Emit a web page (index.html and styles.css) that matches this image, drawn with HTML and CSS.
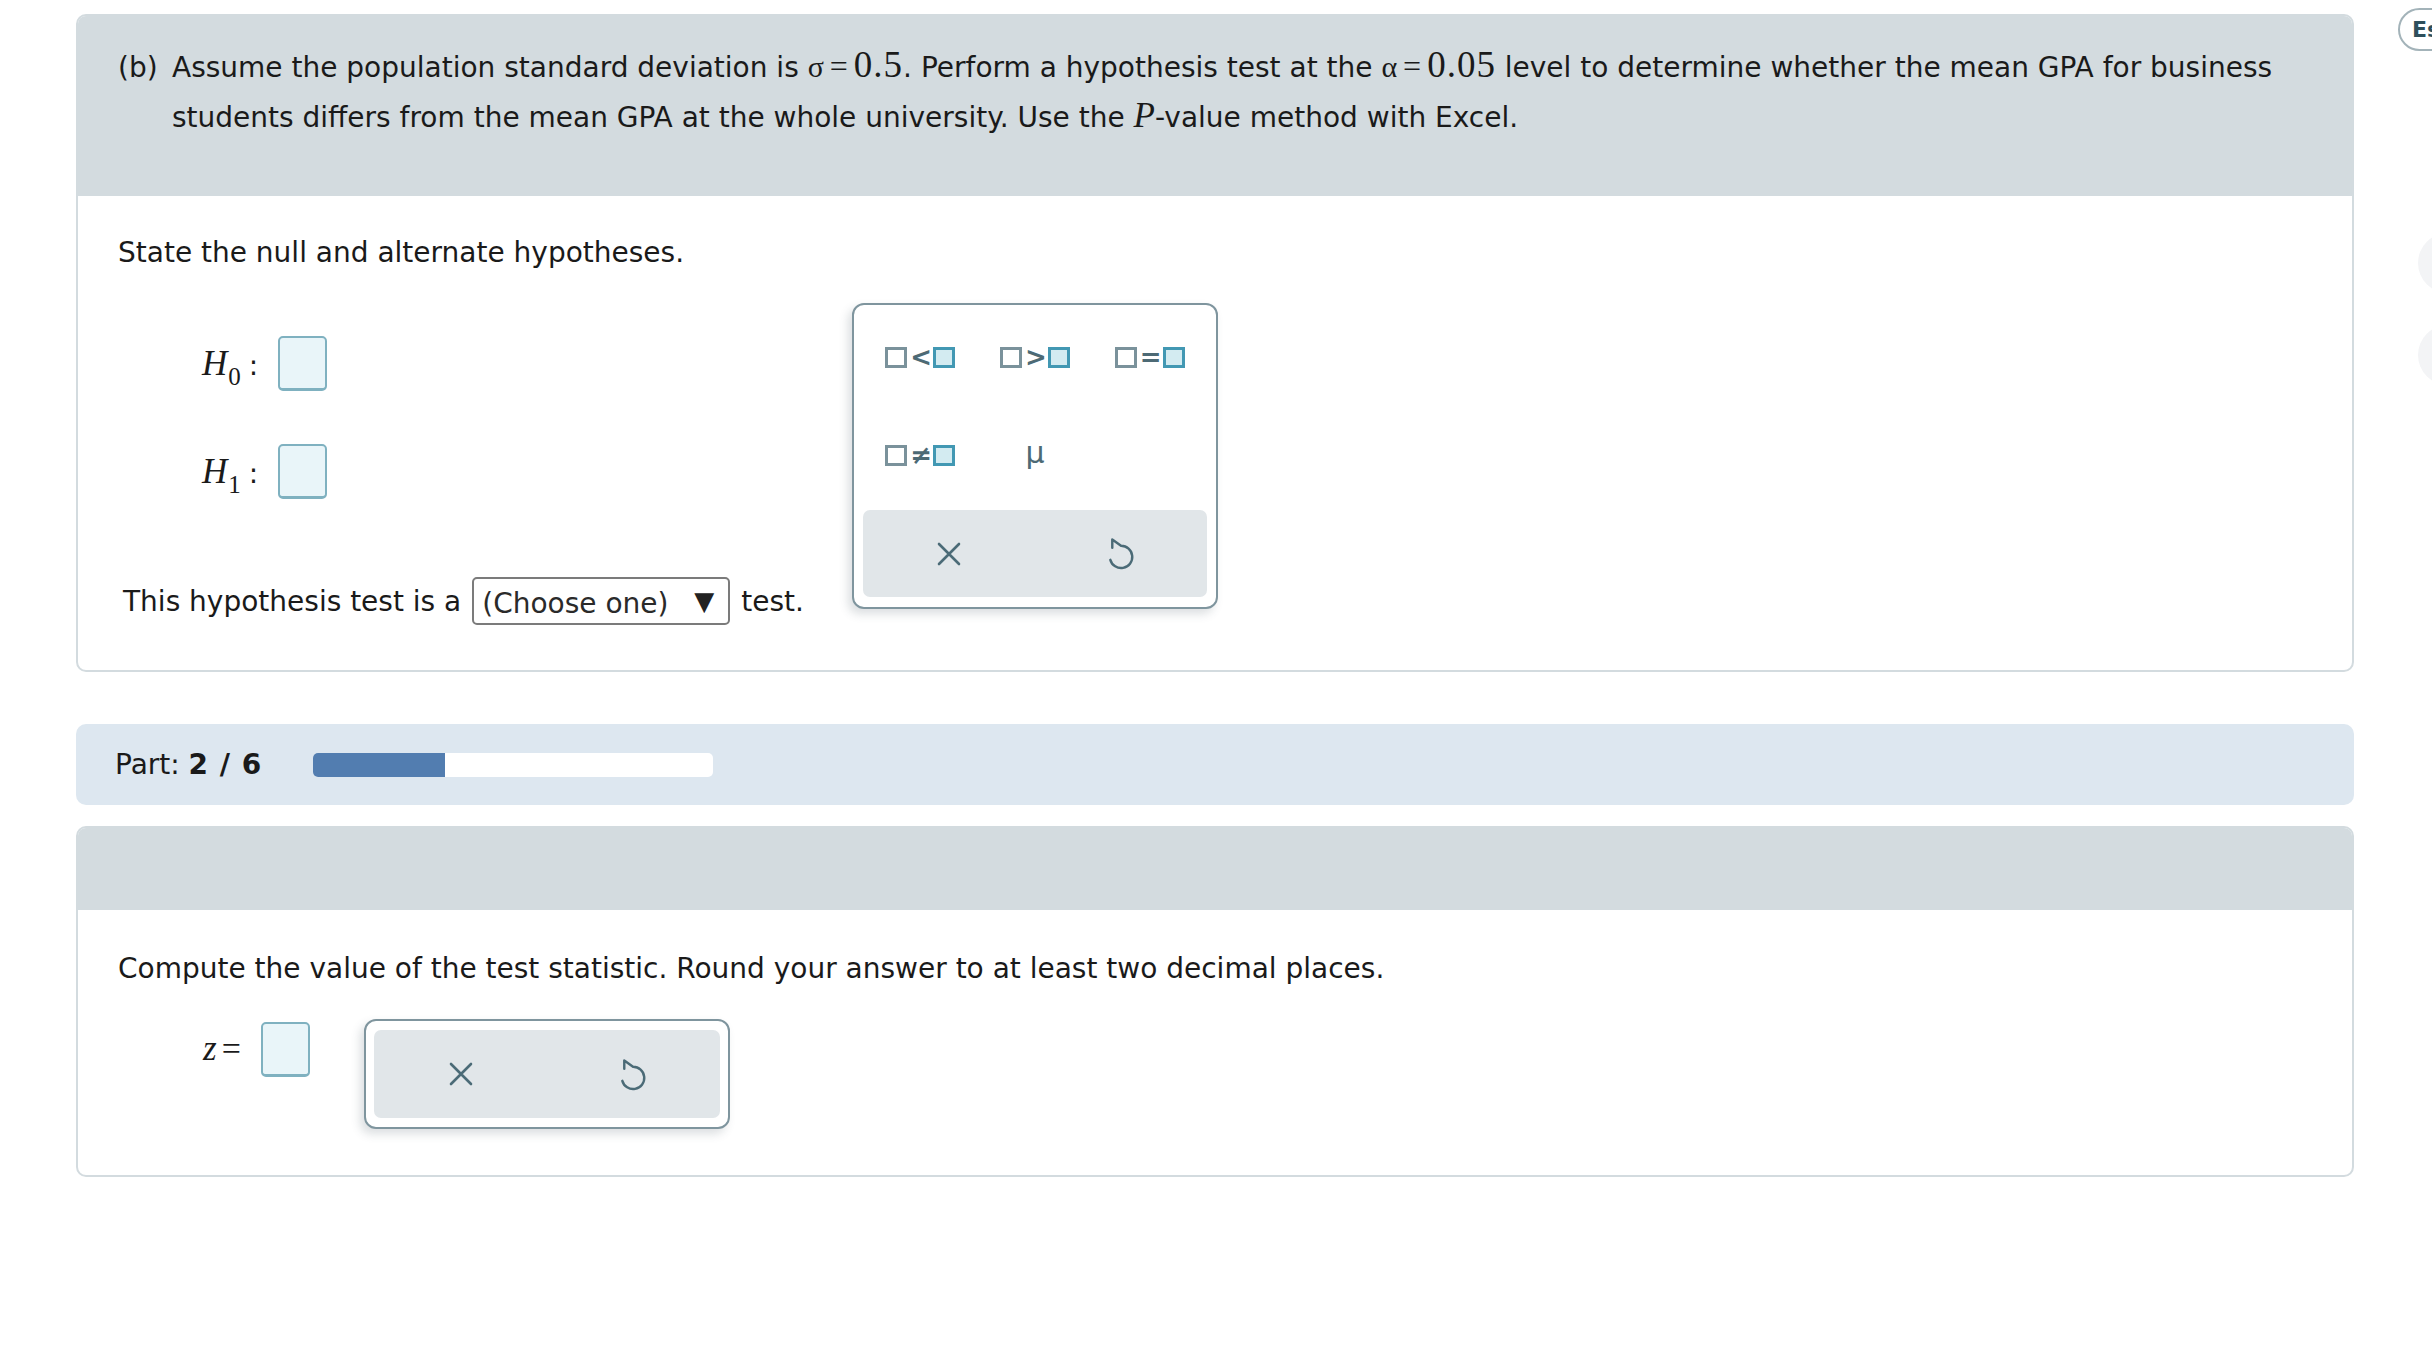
FILE: index.html
```html
<!DOCTYPE html>
<html lang="en">

<head>
    <meta charset="UTF-8">
    <meta name="viewport" content="width=device-width, initial-scale=1.0">
    <title>Hypothesis Test - Part 2</title>
    <link rel="stylesheet" href="styles.css">
</head>

<body>
    <div class="page">
        <div class="main">

            <!-- Part b -->
            <div class="card">
                <div class="card-head">
                    <div class="question">
                        <span class="q-label">(b)</span>
                        <p class="q-text">Assume the population standard deviation is
                            <span class="math"><span class="greek">σ</span><span class="eq">=</span><span class="num">0.5</span></span>.
                            Perform a hypothesis test at the
                            <span class="math"><span class="greek">α</span><span class="eq">=</span><span class="num">0.05</span></span>
                            level to determine whether the mean GPA for business students differs from the mean GPA at the
                            whole university. Use the <span class="var">P</span>-value method with Excel.</p>
                    </div>
                </div>
                <div class="card-body">
                    <p class="prompt">State the null and alternate hypotheses.</p>

                    <div class="hyps">
                        <div class="hyp-row">
                            <span class="hyp-label"><span class="var">H</span><sub>0</sub><span class="colon">:</span></span>
                            <span class="answer-box"></span>
                        </div>
                        <div class="hyp-row">
                            <span class="hyp-label"><span class="var">H</span><sub>1</sub><span class="colon">:</span></span>
                            <span class="answer-box"></span>
                        </div>
                    </div>

                    <div class="test-row">
                        <span>This hypothesis test is a</span>
                        <div class="select">
                            <span>(Choose one)</span>
                            <span class="select-arrow">▼</span>
                        </div>
                        <span>test.</span>
                    </div>

                    <!-- keypad that pops up next to the answer boxes -->
                    <div class="keypad keypad-float">
                        <div class="keys">
                            <button class="key"><span class="sq"></span><span class="op">&lt;</span><span class="sq sq-blue"></span></button>
                            <button class="key"><span class="sq"></span><span class="op">&gt;</span><span class="sq sq-blue"></span></button>
                            <button class="key"><span class="sq"></span><span class="op">=</span><span class="sq sq-blue"></span></button>
                            <button class="key"><span class="sq"></span><span class="op">≠</span><span class="sq sq-blue"></span></button>
                            <button class="key key-mu">μ</button>
                        </div>
                        <div class="keypad-foot">
                            <button class="foot-btn">
                                <svg width="24" height="24" viewBox="0 0 24 24" fill="none" stroke="#4b6b77" stroke-width="2.6" stroke-linecap="round"><path d="M2 2 L22 22 M22 2 L2 22" /></svg>
                            </button>
                            <button class="foot-btn">
                                <svg width="27" height="33" viewBox="0 0 27 34" fill="none" stroke="#4b6b77" stroke-width="2.5" stroke-linecap="round" stroke-linejoin="round"><path d="M4 11 L4 2.5 L13 9 A11.5 11.5 0 1 1 2 23.5" /></svg>
                            </button>
                        </div>
                    </div>
                </div>
            </div>

            <!-- progress -->
            <div class="part-bar">
                <span class="part-text">Part: <b>2 / 6</b></span>
                <div class="progress"><div class="progress-fill" style="width: 33%"></div></div>
            </div>

            <!-- Part c -->
            <div class="card">
                <div class="card-head card-head-empty"></div>
                <div class="card-body card-body-2">
                    <p class="prompt">Compute the value of the test statistic. Round your answer to at least two decimal places.</p>

                    <div class="z-row">
                        <span class="z-label"><span class="var">z</span><span class="eq">=</span></span>
                        <span class="answer-box"></span>
                        <div class="keypad keypad-small">
                            <div class="keypad-foot">
                                <button class="foot-btn">
                                    <svg width="24" height="24" viewBox="0 0 24 24" fill="none" stroke="#4b6b77" stroke-width="2.6" stroke-linecap="round"><path d="M2 2 L22 22 M22 2 L2 22" /></svg>
                                </button>
                                <button class="foot-btn">
                                    <svg width="27" height="33" viewBox="0 0 27 34" fill="none" stroke="#4b6b77" stroke-width="2.5" stroke-linecap="round" stroke-linejoin="round"><path d="M4 11 L4 2.5 L13 9 A11.5 11.5 0 1 1 2 23.5" /></svg>
                                </button>
                            </div>
                        </div>
                    </div>
                </div>
            </div>
        </div>

        <div class="sidebar">
            <div class="lang-pill">Español</div>
            <div class="side-circle"></div>
            <div class="side-circle"></div>
        </div>
    </div>
</body>

</html>
```

FILE: styles.css
```css
* {
    margin: 0;
    padding: 0;
    box-sizing: border-box;
}

body {
    font-family: "DejaVu Sans", Verdana, sans-serif;
    font-size: 28px;
    color: #1a1a1a;
    background-color: #fff;
    overflow: hidden;
}

.page {
    display: flex;
    gap: 44px;
    padding: 8px 0 0 76px;
}

.main {
    width: 2278px;
    flex-shrink: 0;
    padding-top: 6px;
}

/* Cards */
.card {
    border: 2px solid #d3dbdf;
    border-radius: 10px;
}

.card-head {
    background-color: #d3dbdf;
    border-radius: 8px 8px 0 0;
    padding: 25px 40px 54px 40px;
}

.card-head-empty {
    height: 82px;
    padding: 0;
}

.question {
    display: flex;
    align-items: baseline;
    line-height: 48px;
}

.q-label {
    width: 54px;
    flex-shrink: 0;
}

.q-text {
    max-width: 2140px;
}

/* inline math */
.math {
    font-family: "Liberation Serif", "Times New Roman", serif;
    white-space: nowrap;
}

.greek {
    font-size: 30px;
}

.eq {
    font-family: "Liberation Serif", serif;
    font-size: 32px;
    padding: 0 6px;
}

.num {
    font-size: 37px;
    letter-spacing: 1px;
}

.var {
    font-family: "Liberation Serif", "Times New Roman", serif;
    font-style: italic;
    font-size: 35px;
}

.card-body {
    position: relative;
    padding: 37px 40px 45px 40px;
}

.card-body-2 {
    padding: 39px 40px 46px 40px;
}

.prompt {
    line-height: 40px;
}

/* Hypotheses */
.hyps {
    display: flex;
    flex-direction: column;
    gap: 53px;
    margin-top: 63px;
    padding-left: 84px;
}

.hyp-row {
    display: flex;
    align-items: center;
    gap: 10px;
}

.hyp-label {
    display: flex;
    align-items: baseline;
    width: 66px;
}

.hyp-label sub {
    font-family: "Liberation Serif", serif;
    font-size: 25px;
    position: relative;
    top: 10px;
    vertical-align: baseline;
    margin-left: 1px;
}

.colon {
    margin-left: 8px;
    font-size: 28px;
}

.answer-box {
    display: inline-block;
    width: 49px;
    height: 55px;
    background-color: #e9f5f9;
    border: 2px solid #7fb1c0;
    border-bottom-width: 3px;
    border-radius: 5px;
    flex-shrink: 0;
}

/* Select row */
.test-row {
    display: flex;
    align-items: center;
    gap: 11px;
    margin-top: 78px;
    padding-left: 5px;
}

.select {
    display: flex;
    align-items: center;
    justify-content: space-between;
    width: 258px;
    height: 48px;
    padding: 4px 14px 0 8px;
    border: 2px solid #7b7b7b;
    border-radius: 5px;
    color: #2a2a2a;
}

.select-arrow {
    font-size: 26px;
    color: #222;
    margin-top: -4px;
}

/* Keypad */
.keypad {
    background-color: #fff;
    border: 2px solid #7f959e;
    border-radius: 12px;
    box-shadow: -4px 5px 10px rgba(60, 80, 90, 0.18);
}

.keypad-float {
    position: absolute;
    left: 774px;
    top: 107px;
    width: 366px;
    height: 306px;
    padding: 3px 9px 10px 9px;
}

.keys {
    display: grid;
    grid-template-columns: repeat(3, 1fr);
    grid-auto-rows: 98px;
}

.key {
    display: flex;
    align-items: center;
    justify-content: center;
    gap: 3px;
    background: none;
    border: none;
    font-family: "DejaVu Sans", sans-serif;
    color: #4d6a75;
    cursor: pointer;
}

.key-mu {
    font-size: 30px;
    padding-bottom: 6px;
}

.sq {
    display: inline-block;
    width: 22px;
    height: 21px;
    border: 3px solid #7a929b;
    background-color: #fff;
}

.sq-blue {
    border-color: #4298b3;
    background-color: #d3ebf1;
}

.op {
    font-size: 26px;
    line-height: 1;
    color: #4d6a75;
    font-weight: bold;
    width: 20px;
    text-align: center;
}

.keypad-foot {
    display: grid;
    grid-template-columns: 1fr 1fr;
    height: 87px;
    margin-top: 6px;
    background-color: #e1e6e9;
    border-radius: 7px;
}

.foot-btn {
    display: flex;
    align-items: center;
    justify-content: center;
    background: none;
    border: none;
    cursor: pointer;
}

/* z row */
.z-row {
    display: flex;
    align-items: flex-start;
    margin-top: 30px;
    padding-left: 85px;
}

.z-label {
    display: flex;
    align-items: baseline;
    width: 58px;
    margin-top: 10px;
}

.z-label .eq {
    font-size: 34px;
    padding: 0 0 0 5px;
}

.z-row .answer-box {
    margin-top: 3px;
}

.keypad-small {
    width: 366px;
    height: 110px;
    margin-left: 54px;
    padding: 9px 8px 9px 8px;
}

.keypad-small .keypad-foot {
    margin-top: 0;
    height: 88px;
}

/* Part progress bar */
.part-bar {
    display: flex;
    align-items: center;
    gap: 51px;
    height: 81px;
    margin: 52px 0 21px 0;
    padding-left: 39px;
    background-color: #dde7f0;
    border-radius: 10px;
}

.part-text b {
    letter-spacing: 1px;
}

.progress {
    width: 400px;
    height: 24px;
    background-color: #fff;
    border-radius: 5px;
    overflow: hidden;
}

.progress-fill {
    height: 100%;
    background-color: #527db0;
}

/* Right side tools (mostly cut off) */
.sidebar {
    width: 200px;
    flex-shrink: 0;
    display: flex;
    flex-direction: column;
}

.lang-pill {
    height: 43px;
    padding: 0 12px;
    border: 2px solid #a3b3b9;
    border-radius: 22px;
    font-size: 22px;
    font-weight: bold;
    line-height: 39px;
    color: #2e4f5b;
    white-space: nowrap;
    align-self: flex-start;
}

.side-circle {
    width: 60px;
    height: 60px;
    margin: 182px 0 0 20px;
    border-radius: 50%;
    background-color: #f3f4f6;
}

.side-circle + .side-circle {
    margin-top: 32px;
}
```
